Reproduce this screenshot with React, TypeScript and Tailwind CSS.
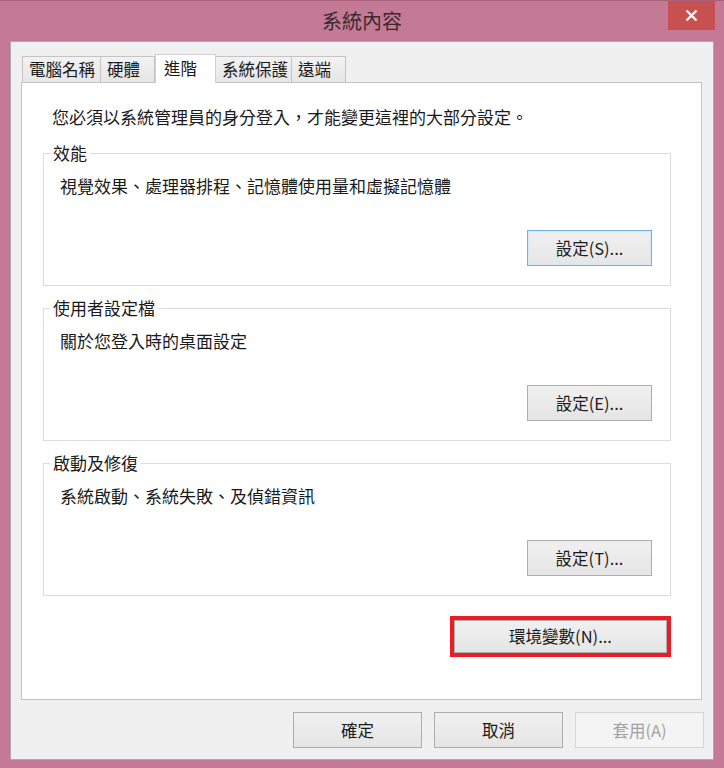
import React from "react";

const font = { fontFamily: '"Noto Sans CJK TC", "Noto Sans", sans-serif' };

const tabs = [
  { label: "電腦名稱", w: "w-[79px]" },
  { label: "硬體", w: "w-[55px]" },
  { label: "進階", w: "w-[61px]", active: true },
  { label: "系統保護", w: "w-[77px]" },
  { label: "遠端", w: "w-[55px]" },
];

const groups = [
  {
    title: "效能",
    desc: "視覺效果、處理器排程、記憶體使用量和虛擬記憶體",
    button: "設定(S)...",
    isDefault: true,
  },
  {
    title: "使用者設定檔",
    desc: "關於您登入時的桌面設定",
    button: "設定(E)...",
  },
  {
    title: "啟動及修復",
    desc: "系統啟動、系統失敗、及偵錯資訊",
    button: "設定(T)...",
  },
];

const Button = ({
  children,
  className = "",
  isDefault = false,
  disabled = false,
}: {
  children: React.ReactNode;
  className?: string;
  isDefault?: boolean;
  disabled?: boolean;
}) => (
  <button
    className={
      "flex items-center justify-center text-[16.5px] leading-none border bg-gradient-to-b " +
      (disabled
        ? "border-[#D5D5D5] from-[#F4F4F4] to-[#F4F4F4] text-[#A2A2A2] "
        : isDefault
        ? "border-[#6FB0EC] from-[#F0F0F0] to-[#E6E6E6] text-[#1A1A1A] shadow-[inset_0_0_0_1px_#D6E9FA] "
        : "border-[#ADADAD] from-[#F0F0F0] to-[#E5E5E5] text-[#1A1A1A] ") +
      className
    }
  >
    {children}
  </button>
);

const App: React.FC = () => {
  return (
    <div
      className="w-[724px] h-[768px] bg-[#C47A94] flex flex-col border-t border-[#A9607B]"
      style={font}
    >
      {/* 標題列 */}
      <div className="relative h-[40px] flex items-center justify-center">
        <span className="text-[20px] text-[#3A2A30] leading-none -mt-[1px]">系統內容</span>
        <div className="absolute right-[9px] top-0 w-[47px] h-[29px] bg-[#C75050] flex items-center justify-center">
          <svg width="13" height="13" viewBox="0 0 13 13">
            <path d="M1.5 1.5 L11.5 11.5 M11.5 1.5 L1.5 11.5" stroke="#fff" strokeWidth="2.4" />
          </svg>
        </div>
      </div>

      {/* 內容 */}
      <div className="mx-[10px] mb-[8px] flex-1 bg-[#F0F0F0] border border-[#B8A4AD] flex flex-col pt-[12px] pb-[11px]">
        {/* 分頁 */}
        <div className="flex items-end h-[28px] ml-[11px]">
          {tabs.map((t) =>
            t.active ? (
              <div
                key={t.label}
                className={`${t.w} h-[29px] -mb-[1px] relative z-10 bg-white border border-b-0 border-[#D0D0D0] flex items-center pl-[8px] text-[16.5px] leading-none text-[#1A1A1A]`}
              >
                <span className="-mt-[2px]">{t.label}</span>
              </div>
            ) : (
              <div
                key={t.label}
                className={`${t.w} h-[26px] bg-gradient-to-b from-[#F2F2F2] to-[#E6E6E6] border border-b-0 border-[#C4C4C4] -ml-px first:ml-0 flex items-center pl-[6px] text-[16.5px] leading-none text-[#1A1A1A]`}
              >
                {t.label}
              </div>
            )
          )}
        </div>

        {/* 分頁內容 */}
        <div className="ml-[10px] w-[681px] h-[618px] bg-white border border-[#C4C4C4] pt-[22px]">
          <p className="pl-[30px] text-[17px] leading-[24px] text-[#1A1A1A]">
            您必須以系統管理員的身分登入，才能變更這裡的大部分設定。
          </p>

          <div className="ml-[21px] w-[628px] mt-[12px] flex flex-col gap-[10px]">
            {groups.map((g) => (
              <fieldset
                key={g.title}
                className="border border-[#DCDCDC] pl-[6px] pr-[18px] pb-[19px]"
              >
                <legend className="px-[3px] text-[17px] leading-[24px] text-[#1A1A1A]">
                  {g.title}
                </legend>
                <p className="mt-[9px] pl-[10px] text-[17px] leading-[24px] text-[#1A1A1A]">
                  {g.desc}
                </p>
                <div className="mt-[32px] flex justify-end">
                  <Button className="w-[125px] h-[36px]" isDefault={g.isDefault}>
                    {g.button}
                  </Button>
                </div>
              </fieldset>
            ))}
          </div>

          <div className="ml-[21px] w-[628px] mt-[20px] flex justify-end">
            <div className="border-[4px] border-[#ED1C24] p-0">
              <Button className="w-[213px] h-[33px]">環境變數(N)...</Button>
            </div>
          </div>
        </div>

        {/* 底部按鈕 */}
        <div className="mt-[12px] flex justify-end gap-[12px] pr-[9px]">
          <Button className="w-[129px] h-[36px]">確定</Button>
          <Button className="w-[129px] h-[36px]">取消</Button>
          <Button className="w-[129px] h-[36px]" disabled>
            套用(A)
          </Button>
        </div>
      </div>
    </div>
  );
};

export default App;
